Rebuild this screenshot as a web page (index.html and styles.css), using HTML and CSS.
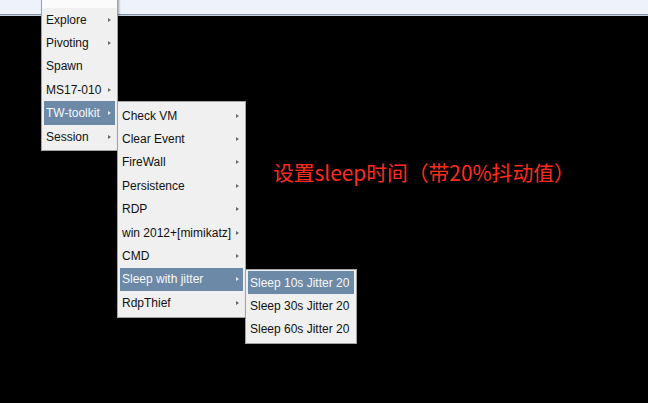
FILE: index.html
```html
<!DOCTYPE html>
<html>
<head>
<meta charset="utf-8">
<link rel="stylesheet" href="styles.css">
</head>
<body>
<div class="topbar"></div>
<div class="stage">
  <div class="menu menu-main">
    <div class="item blank"></div>
    <div class="item"><span>Explore</span><i class="arrow"></i></div>
    <div class="item"><span>Pivoting</span><i class="arrow"></i></div>
    <div class="item"><span>Spawn</span></div>
    <div class="item"><span>MS17-010</span><i class="arrow"></i></div>
    <div class="item active"><span>TW-toolkit</span><i class="arrow"></i></div>
    <div class="item"><span>Session</span><i class="arrow"></i></div>
  </div>
  <div class="menu menu-tw">
    <div class="item"><span>Check VM</span><i class="arrow"></i></div>
    <div class="item"><span>Clear Event</span><i class="arrow"></i></div>
    <div class="item"><span>FireWall</span><i class="arrow"></i></div>
    <div class="item"><span>Persistence</span><i class="arrow"></i></div>
    <div class="item"><span>RDP</span><i class="arrow"></i></div>
    <div class="item"><span>win 2012+[mimikatz]</span><i class="arrow"></i></div>
    <div class="item"><span>CMD</span><i class="arrow"></i></div>
    <div class="item active"><span>Sleep with jitter</span><i class="arrow"></i></div>
    <div class="item"><span>RdpThief</span><i class="arrow"></i></div>
  </div>
  <div class="menu menu-sleep">
    <div class="item active"><span>Sleep 10s Jitter 20</span></div>
    <div class="item"><span>Sleep 30s Jitter 20</span></div>
    <div class="item"><span>Sleep 60s Jitter 20</span></div>
  </div>
  <div class="note">设置sleep时间（带20%抖动值）</div>
</div>
</body>
</html>
```
FILE: styles.css
```css
html, body {
  margin: 0;
  padding: 0;
  background: #000;
  width: 648px;
  height: 403px;
  overflow: hidden;
}
.topbar {
  height: 14px;
  background: #eef2fa;
  border-bottom: 1px solid #7f90a6;
  box-shadow: 0 1px 0 #c8d0dc;
}
.stage {
  position: relative;
  height: 387px;
}
.menu {
  position: absolute;
  box-sizing: border-box;
  background: #f0f0f0;
  border: 1px solid #a3a3a3;
  padding: 2px;
  font-family: "Liberation Sans", Arial, sans-serif;
  font-size: 12px;
  color: #111;
  box-shadow: 1px 1px 2px rgba(0,0,0,0.35);
}
.menu-main {
  left: 41px;
  top: -33.5px;
  width: 77px;
}
.menu-tw {
  left: 117px;
  top: 86px;
  width: 129px;
}
.menu-sleep {
  left: 245px;
  top: 254px;
  width: 112px;
  padding-top: 1px;
}
.item {
  height: 23.4px;
  display: flex;
  align-items: center;
  justify-content: space-between;
  padding: 0 4px 0 2px;
  white-space: nowrap;
}
.item.blank {
  background: #fbfbfb;
  margin: -2px -2px 0;
  padding-top: 2px;
}
.item.active {
  background: #6c89a7;
  color: #f6f8fb;
}
.arrow {
  width: 0;
  height: 0;
  border-top: 2.5px solid transparent;
  border-bottom: 2.5px solid transparent;
  border-left: 3px solid #6a6a6a;
  margin-left: 4px;
}
.item.active .arrow {
  border-left-color: #e8edf3;
}
.note {
  position: absolute;
  left: 273px;
  top: 142px;
  font-family: "Noto Sans CJK SC", "Noto Sans", sans-serif;
  font-size: 20.8px;
  color: #ff2b1c;
  white-space: nowrap;
}
```
